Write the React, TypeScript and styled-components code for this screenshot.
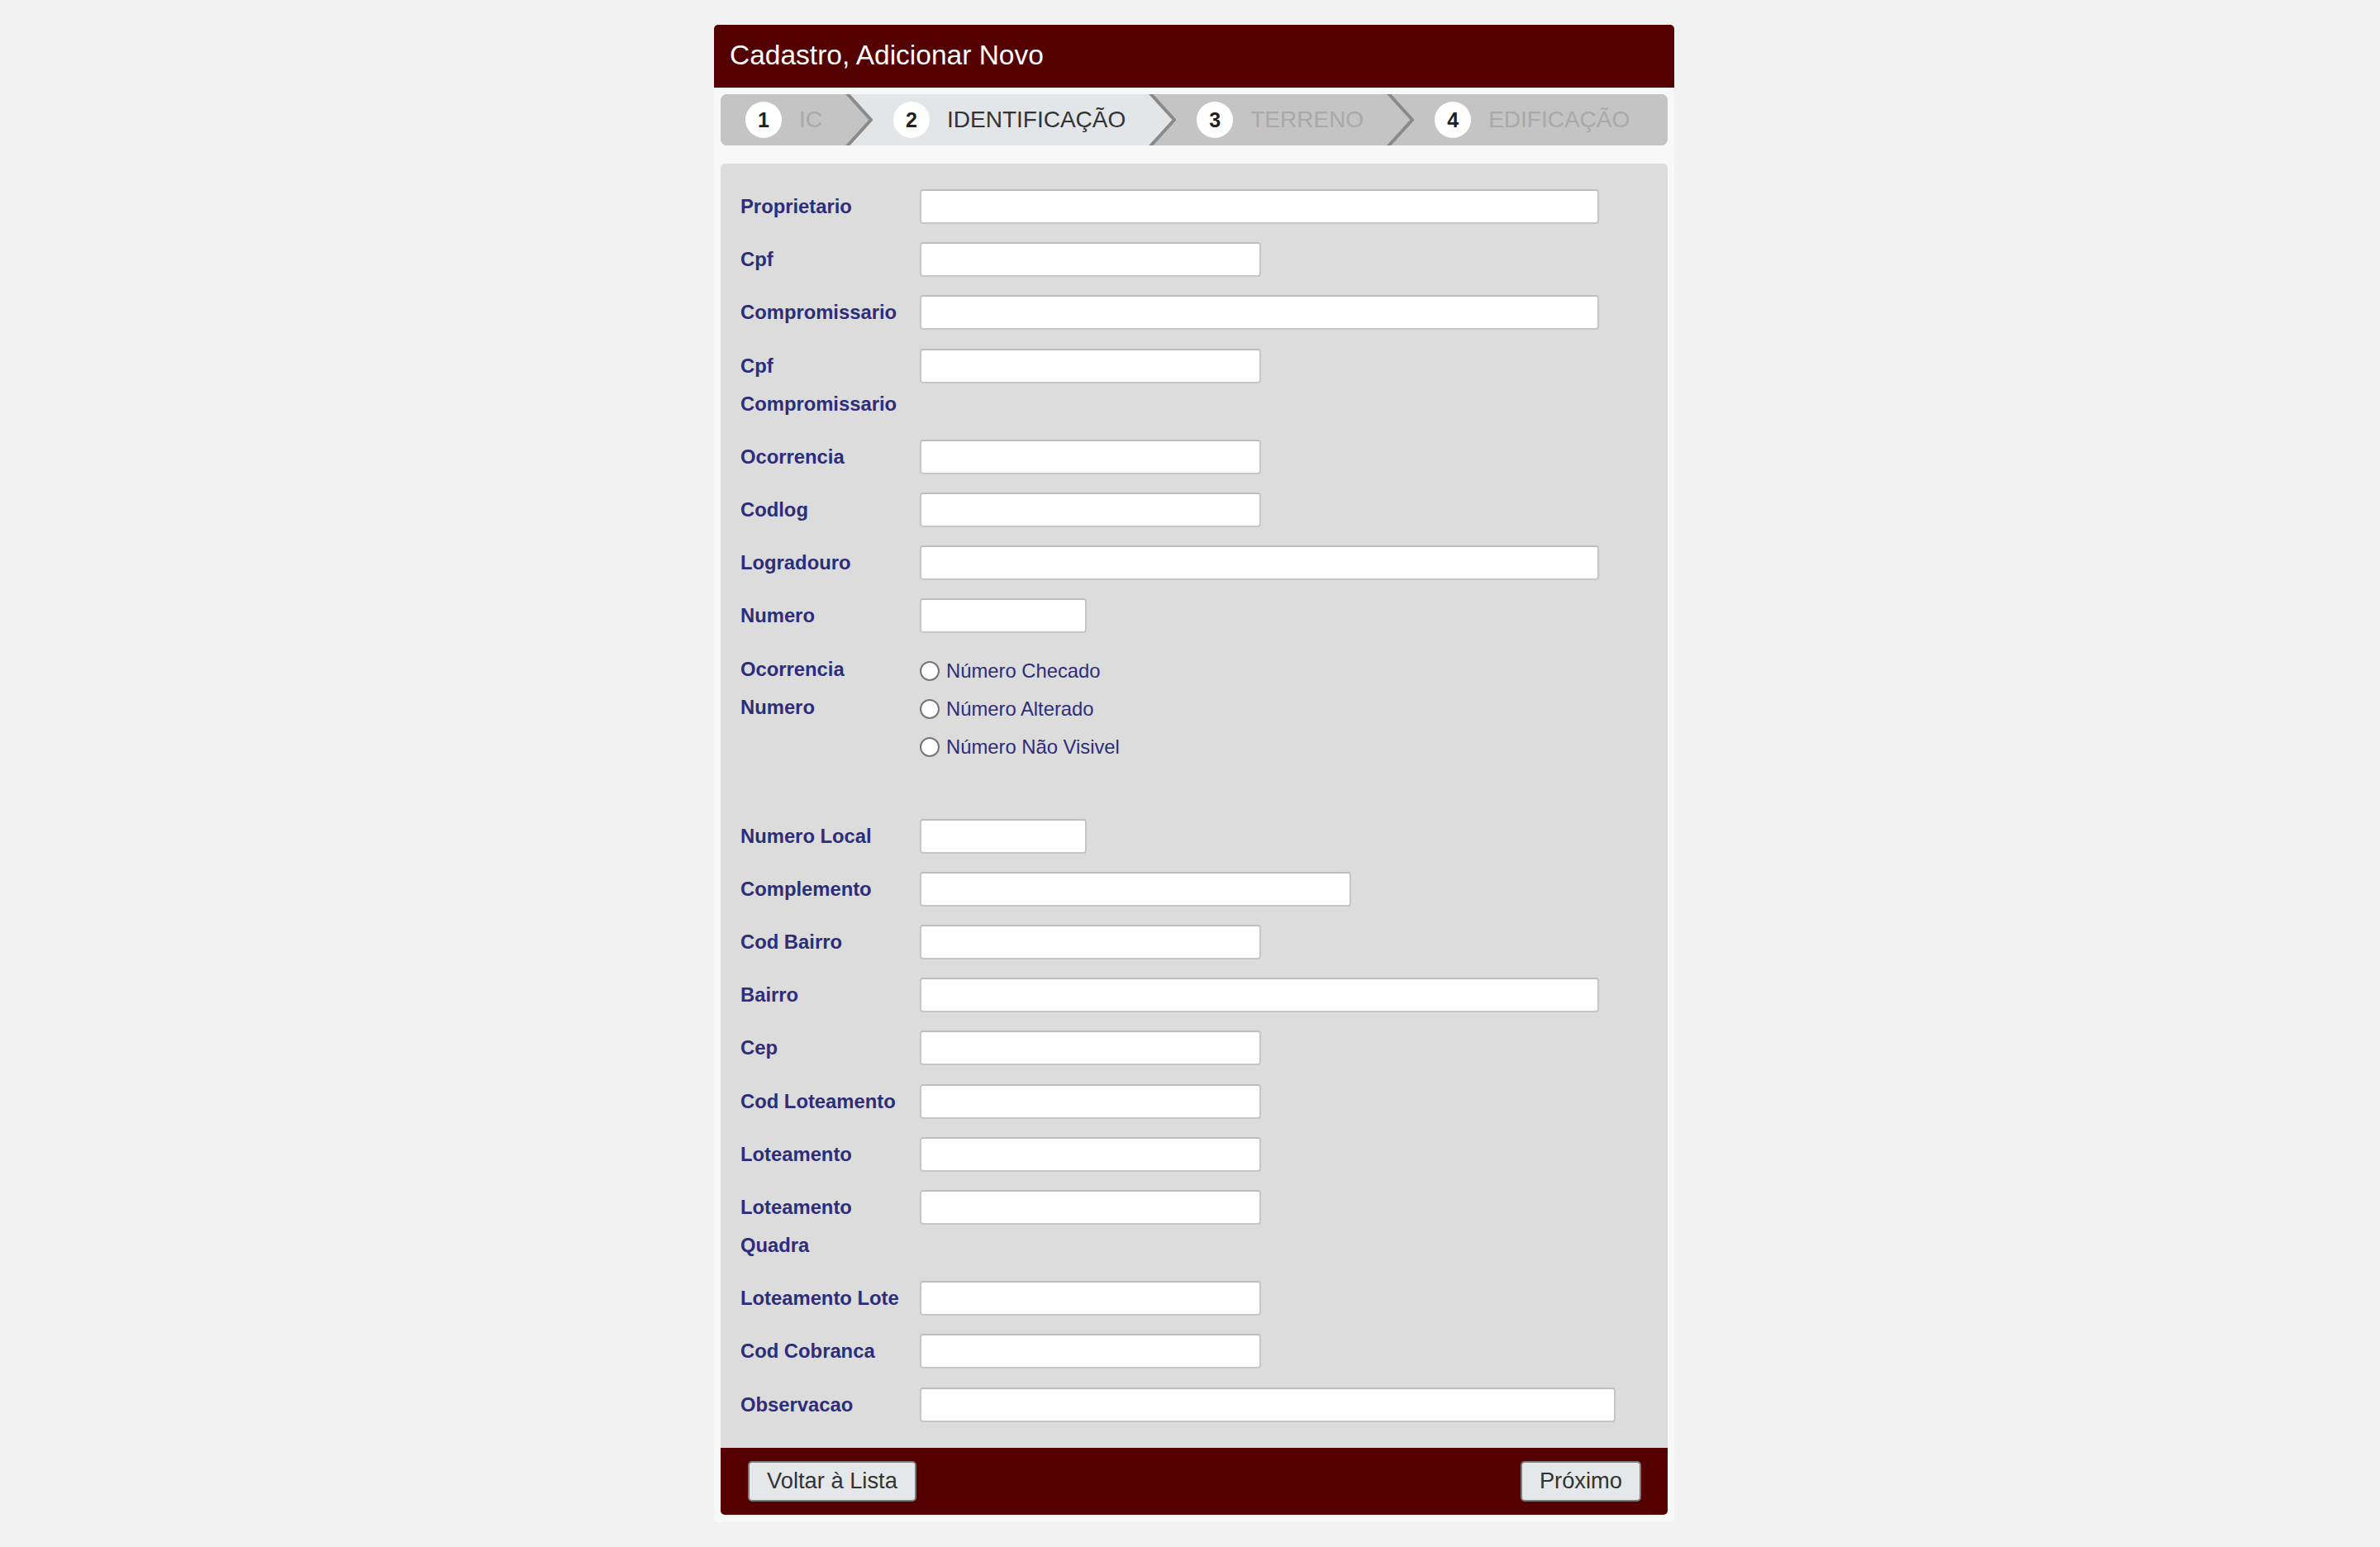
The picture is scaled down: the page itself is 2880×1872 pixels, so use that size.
import styled, { createGlobalStyle } from 'styled-components';

const GlobalStyle = createGlobalStyle`
  html, body {
    margin: 0;
    padding: 0;
    background: #f2f2f2;
    font-family: "Liberation Sans", Arial, sans-serif;
  }
  * {
    box-sizing: border-box;
  }
`;

const Card = styled.div`
  width: 1162px;
  margin: 30px 0 30px calc(50% - 576px);
  padding: 0 8px 9px 8px;
  background: #f8f8f8;
  border-radius: 5px;
  display: flex;
  flex-direction: column;
`;

const Header = styled.div`
  height: 76px;
  margin: 0 -8px;
  padding: 0 19px 3px 19px;
  background: #540000;
  border-radius: 5px 5px 0 0;
  color: #ffffff;
  font-size: 33.5px;
  display: flex;
  align-items: center;
`;

const StepsBar = styled.div`
  margin-top: 8px;
  height: 62px;
  border-radius: 8px;
  overflow: hidden;
  background: #c4c4c4;
  display: flex;
`;

const Step = styled.div<{ $active?: boolean; $first?: boolean; $last?: boolean }>`
  display: flex;
  align-items: center;
  gap: 21px;
  padding: 0 28px 0 ${(p) => (p.$first ? 30 : 25)}px;
  flex: ${(p) => (p.$last ? 1 : 'none')};
  background: ${(p) => (p.$active ? '#e3e6e8' : '#c4c4c4')};
  color: ${(p) => (p.$active ? '#333333' : '#a9a9a9')};
  font-size: 28px;
`;

const StepNumber = styled.span`
  width: 44px;
  height: 44px;
  border-radius: 50%;
  background: #ffffff;
  color: #222222;
  font-weight: bold;
  font-size: 25px;
  display: flex;
  align-items: center;
  justify-content: center;
`;

const Panel = styled.div`
  margin-top: 22px;
  padding: 31px 25px 29px 24px;
  background: #dcdcdc;
  border-radius: 5px 5px 0 0;
  display: flex;
  flex-direction: column;
  gap: 20.2px;
`;

const Row = styled.div`
  display: grid;
  grid-template-columns: 217px 1fr;
  align-items: start;
`;

const Label = styled.label`
  margin-top: -2px;
  padding-right: 8px;
  color: #2d2d7a;
  font-weight: bold;
  font-size: 23.8px;
  line-height: 46px;
`;

const TextInput = styled.input<{ $w: number }>`
  width: ${(p) => p.$w}px;
  height: 42px;
  padding: 0 8px;
  background: #ffffff;
  border: 2px solid #c6c6c6;
  border-top-color: #bdbdbd;
  border-radius: 4px;
  font-family: inherit;
  font-size: 22px;
  outline: none;
`;

const RadioGroup = styled.div`
  display: flex;
  flex-direction: column;
  padding-bottom: 44px;
`;

const RadioLine = styled.label`
  height: 46px;
  display: flex;
  align-items: center;
  gap: 8px;
  color: #2d2d7a;
  font-size: 23.8px;
`;

const Radio = styled.input`
  appearance: none;
  margin: 0;
  width: 24px;
  height: 24px;
  border: 2px solid #767676;
  border-radius: 50%;
  background: #ffffff;
`;

const Footer = styled.div`
  height: 81px;
  padding: 0 32px 0 33px;
  background: #540000;
  border-radius: 0 0 5px 5px;
  display: flex;
  align-items: center;
  justify-content: space-between;
`;

const Button = styled.button`
  height: 49px;
  padding: 0 21px;
  background: #e4e8ea;
  border: 2px solid #7c7c7c;
  border-radius: 5px;
  color: #333333;
  font-family: inherit;
  font-size: 27.3px;
  cursor: pointer;
`;

function Chevron({ left, right }: { left: string; right: string }) {
  return (
    <svg width="33" height="62" viewBox="0 0 33 62" style={{ flex: 'none', display: 'block' }}>
      <rect x="0" y="0" width="33" height="62" fill={right} />
      <polygon points="0,0 1,0 31,31 1,62 0,62" fill={left} />
      <polyline points="1,-2 31,31 1,64" fill="none" stroke="#8a8a8a" strokeWidth="4" />
    </svg>
  );
}

const steps = [
  { n: 1, label: 'IC' },
  { n: 2, label: 'IDENTIFICAÇÃO' },
  { n: 3, label: 'TERRENO' },
  { n: 4, label: 'EDIFICAÇÃO' },
];
const activeStep = 2;

const LONG = 822;
const MID = 413;
const SHORT = 202;

const fields: { label: string; w: number }[] = [
  { label: 'Proprietario', w: LONG },
  { label: 'Cpf', w: MID },
  { label: 'Compromissario', w: LONG },
  { label: 'Cpf Compromissario', w: MID },
  { label: 'Ocorrencia', w: MID },
  { label: 'Codlog', w: MID },
  { label: 'Logradouro', w: LONG },
  { label: 'Numero', w: SHORT },
];

const fieldsAfter: { label: string; w: number }[] = [
  { label: 'Numero Local', w: SHORT },
  { label: 'Complemento', w: 522 },
  { label: 'Cod Bairro', w: MID },
  { label: 'Bairro', w: LONG },
  { label: 'Cep', w: MID },
  { label: 'Cod Loteamento', w: MID },
  { label: 'Loteamento', w: MID },
  { label: 'Loteamento Quadra', w: MID },
  { label: 'Loteamento Lote', w: MID },
  { label: 'Cod Cobranca', w: MID },
  { label: 'Observacao', w: 842 },
];

const radioOptions = ['Número Checado', 'Número Alterado', 'Número Não Visivel'];

const stepBg = (n: number) => (n === activeStep ? '#e3e6e8' : '#c4c4c4');

export default function App() {
  const renderField = (f: { label: string; w: number }) => (
    <Row key={f.label}>
      <Label>{f.label}</Label>
      <TextInput type="text" $w={f.w} />
    </Row>
  );

  return (
    <>
      <GlobalStyle />
      <Card>
        <Header>Cadastro, Adicionar Novo</Header>
        <StepsBar>
          {steps.map((s, i) => (
            <div key={s.n} style={{ display: 'contents' }}>
              <Step
                $active={s.n === activeStep}
                $first={i === 0}
                $last={i === steps.length - 1}
              >
                <StepNumber>{s.n}</StepNumber>
                <span>{s.label}</span>
              </Step>
              {i < steps.length - 1 && (
                <Chevron left={stepBg(s.n)} right={stepBg(steps[i + 1].n)} />
              )}
            </div>
          ))}
        </StepsBar>
        <Panel>
          {fields.map(renderField)}
          <Row>
            <Label>Ocorrencia Numero</Label>
            <RadioGroup>
              {radioOptions.map((o) => (
                <RadioLine key={o}>
                  <Radio type="radio" name="ocorrencia_numero" />
                  {o}
                </RadioLine>
              ))}
            </RadioGroup>
          </Row>
          {fieldsAfter.map(renderField)}
        </Panel>
        <Footer>
          <Button>Voltar à Lista</Button>
          <Button>Próximo</Button>
        </Footer>
      </Card>
    </>
  );
}
